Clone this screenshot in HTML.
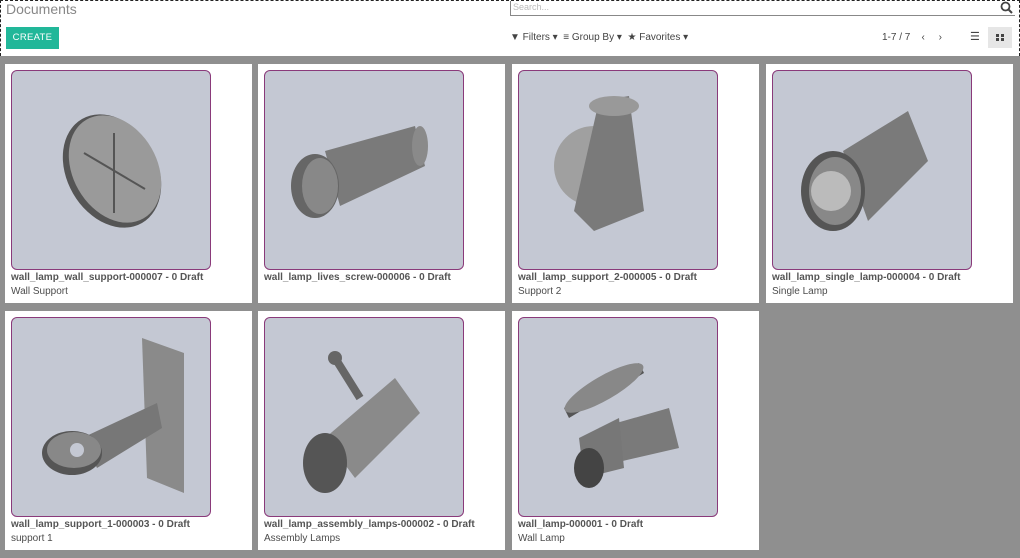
<!DOCTYPE html>
<html><head><meta charset="utf-8"><style>
*{box-sizing:border-box;margin:0;padding:0}
body{width:1020px;height:558px;overflow:hidden;background:#8f8f8f;font-family:"Liberation Sans",sans-serif;position:relative}
.top{position:absolute;left:0;top:0;width:1020px;height:56px;background:#fff;border:1px dashed #222;border-bottom:none}
.title{position:absolute;left:5px;top:0;font-size:14px;color:#888}
.create{position:absolute;left:5px;top:26px;width:53px;height:22px;background:#21b799;color:#fff;font-size:9.5px;line-height:22px;text-align:center;letter-spacing:.3px}
.search{position:absolute;left:509px;top:0;width:505px;height:15px;border-bottom:1px solid #888;border-left:1px solid #888;font-size:9px;color:#bbb;padding-left:2px;line-height:13px}
.ctl{position:absolute;top:31px;font-size:10px;color:#444}
.card{position:absolute;width:247px;height:239px;background:#fff}
.img{position:absolute;left:6px;top:6px;width:200px;height:200px;background:#c4c8d3;border:1px solid #8a3a7a;border-radius:6px;overflow:hidden}
.n{position:absolute;left:6px;top:208px;font-size:10px;font-weight:bold;color:#555}
.s{position:absolute;left:6px;top:222px;font-size:10px;color:#4c4c4c}
</style></head><body>
<div class="top">
<div class="title">Documents</div>
<div class="create">CREATE</div>
<div class="search">Search...</div>
<svg style="position:absolute;left:999px;top:0" width="13" height="13" viewBox="0 0 13 13"><circle cx="5.5" cy="5.5" r="4" fill="none" stroke="#444" stroke-width="1.8"/><path d="M8.5 8.5L12 12" stroke="#444" stroke-width="2"/></svg>
<div class="ctl" style="left:509px">▼ Filters ▾ &nbsp;≡ Group By ▾ &nbsp;★ Favorites ▾</div>
<div class="ctl" style="left:881px">1-7 / 7 &nbsp;&nbsp; ‹ &nbsp;&nbsp;&nbsp; ›</div>
<div class="ctl" style="left:969px;font-size:11px;top:29px">☰</div>
<div style="position:absolute;left:987px;top:26px;width:24px;height:21px;background:#e6e6e6"><div style="position:absolute;left:8px;top:7px;width:8px;height:7px;background:
linear-gradient(#444,#444) 0 0/3px 3px no-repeat,linear-gradient(#444,#444) 5px 0/3px 3px no-repeat,linear-gradient(#444,#444) 0 4px/3px 3px no-repeat,linear-gradient(#444,#444) 5px 4px/3px 3px no-repeat"></div></div>
</div>

<div class="card" style="left:5px;top:64px"><div class="img"><svg width="200" height="200"><ellipse cx="100" cy="100" rx="45" ry="60" transform="rotate(-30 100 100)" fill="#555"/><ellipse cx="103" cy="98" rx="42" ry="57" transform="rotate(-30 103 98)" fill="#9a9a9a"/><path d="M102 62L102 142M72 82L133 118" stroke="#555" stroke-width="2"/></svg></div><div class="n">wall_lamp_wall_support-000007 - 0 Draft</div><div class="s">Wall Support</div></div>
<div class="card" style="left:258px;top:64px"><div class="img"><svg width="200" height="200"><path d="M60 80L150 55L160 95L75 135Z" fill="#7a7a7a"/><ellipse cx="155" cy="75" rx="8" ry="20" fill="#8a8a8a"/><ellipse cx="50" cy="115" rx="24" ry="32" fill="#666"/><ellipse cx="55" cy="115" rx="18" ry="28" fill="#888"/></svg></div><div class="n">wall_lamp_lives_screw-000006 - 0 Draft</div></div>
<div class="card" style="left:512px;top:64px"><div class="img"><svg width="200" height="200"><circle cx="75" cy="95" r="40" fill="#a0a0a0"/><path d="M80 30L110 25L125 140L75 160L55 140Z" fill="#7a7a7a"/><ellipse cx="95" cy="35" rx="25" ry="10" fill="#999"/></svg></div><div class="n">wall_lamp_support_2-000005 - 0 Draft</div><div class="s">Support 2</div></div>
<div class="card" style="left:766px;top:64px"><div class="img"><svg width="200" height="200"><path d="M70 80L135 40L155 90L95 150Z" fill="#7a7a7a"/><ellipse cx="60" cy="120" rx="32" ry="40" fill="#555"/><ellipse cx="62" cy="120" rx="26" ry="34" fill="#888"/><circle cx="58" cy="120" r="20" fill="#bbb"/></svg></div><div class="n">wall_lamp_single_lamp-000004 - 0 Draft</div><div class="s">Single Lamp</div></div>

<div class="card" style="left:5px;top:311px"><div class="img"><svg width="200" height="200"><path d="M130 20L172 35L172 175L135 160Z" fill="#8a8a8a"/><path d="M70 120L145 85L150 110L85 150Z" fill="#777"/><ellipse cx="60" cy="135" rx="30" ry="22" fill="#555"/><ellipse cx="62" cy="132" rx="27" ry="18" fill="#888"/><circle cx="65" cy="132" r="7" fill="#c4c8d3"/></svg></div><div class="n">wall_lamp_support_1-000003 - 0 Draft</div><div class="s">support 1</div></div>
<div class="card" style="left:258px;top:311px"><div class="img"><svg width="200" height="200"><circle cx="70" cy="40" r="7" fill="#666"/><path d="M70 40L95 80" stroke="#666" stroke-width="8"/><path d="M60 120L130 60L155 95L90 160Z" fill="#8a8a8a"/><ellipse cx="60" cy="145" rx="22" ry="30" fill="#555"/></svg></div><div class="n">wall_lamp_assembly_lamps-000002 - 0 Draft</div><div class="s">Assembly Lamps</div></div>
<div class="card" style="left:512px;top:311px"><div class="img"><svg width="200" height="200"><path d="M45 90L120 45L125 55L50 100Z" fill="#555"/><ellipse cx="85" cy="70" rx="45" ry="12" transform="rotate(-30 85 70)" fill="#888"/><path d="M80 110L150 90L160 130L95 145Z" fill="#7a7a7a"/><path d="M60 120L100 100L105 150L65 160Z" fill="#777"/><ellipse cx="70" cy="150" rx="15" ry="20" fill="#444"/></svg></div><div class="n">wall_lamp-000001 - 0 Draft</div><div class="s">Wall Lamp</div></div>
</body></html>
